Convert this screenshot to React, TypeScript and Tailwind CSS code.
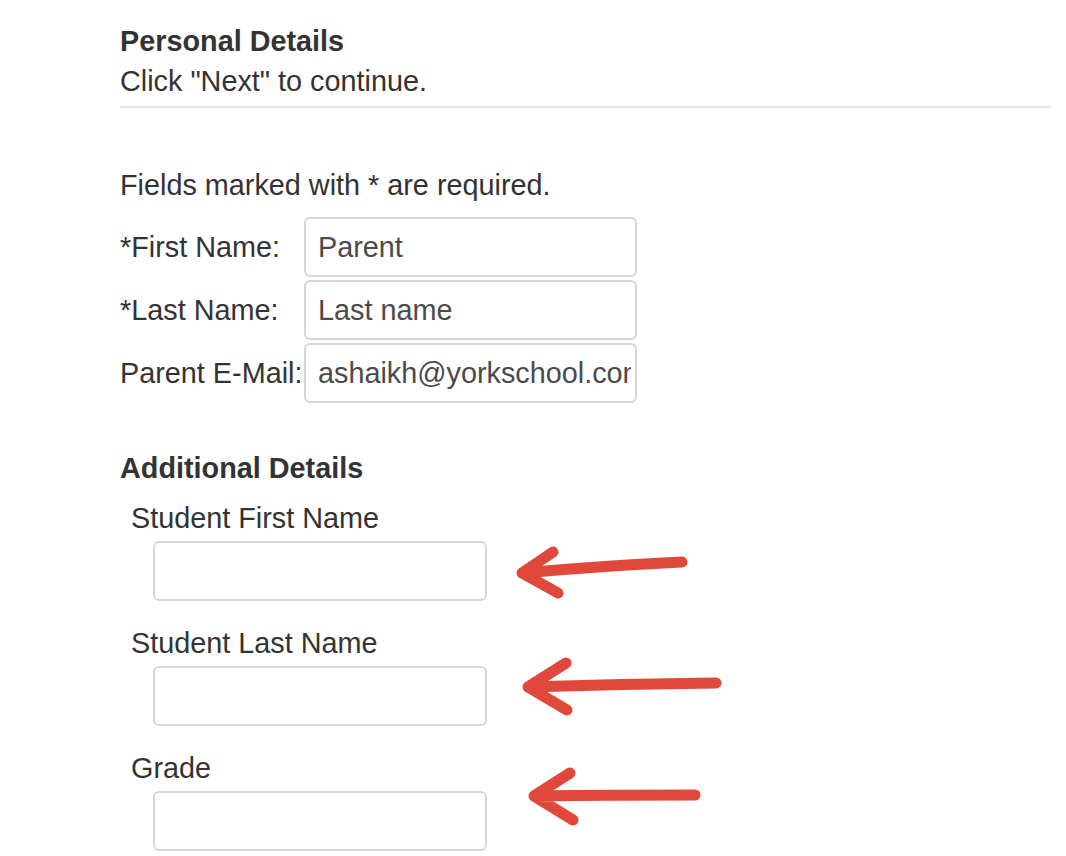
import React from "react";

const font = { fontFamily: '"Liberation Sans", Arial, Helvetica, sans-serif' };

function TextBox({ value, className = "" }: { value?: string; className?: string }) {
  return (
    <input
      readOnly
      value={value ?? ""}
      className={
        "block h-[60px] rounded-[6px] border-2 border-[#d6d6d6] bg-white pl-[12px] pr-[4px] text-[28.8px] text-[#4a4a4a] outline-none " +
        className
      }
      style={font}
    />
  );
}

export default function App() {
  const rows: [string, string][] = [
    ["*First Name:", "Parent"],
    ["*Last Name:", "Last name"],
    ["Parent E-Mail:", "ashaikh@yorkschool.com"],
  ];
  const extra = ["Student First Name", "Student Last Name", "Grade"];
  return (
    <div
      className="relative h-[856px] w-[1066px] overflow-hidden bg-white pl-[120px] pr-[16px] pt-[21px] text-[28.8px] leading-[40px] text-[#333333]"
      style={font}
    >
      <div className="font-bold">Personal Details</div>
      <div>Click "Next" to continue.</div>
      <div className="mt-[5px] h-[2px] bg-[#e3e3e3]" />
      <div className="mt-[57px]">Fields marked with * are required.</div>
      <div className="mt-[12px] flex flex-col gap-[3px]">
        {rows.map(([label, val]) => (
          <div key={label} className="flex items-center">
            <div className="w-[184px] whitespace-nowrap">{label}</div>
            <TextBox value={val} className="w-[333px]" />
          </div>
        ))}
      </div>
      <div className="mt-[45px] font-bold">Additional Details</div>
      <div className="mt-[10px] flex flex-col gap-[22px] pl-[11px]">
        {extra.map((label) => (
          <div key={label}>
            <div>{label}</div>
            <TextBox className="ml-[22px] mt-[3px] w-[334px]" />
          </div>
        ))}
      </div>
      <svg
        className="pointer-events-none absolute left-0 top-0"
        width="1066"
        height="856"
        viewBox="0 0 1066 856"
        fill="none"
        stroke="#e0483b"
        strokeWidth="11"
        strokeLinecap="round"
        strokeLinejoin="round"
      >
        <path d="M682 562 Q600 566 522 573 M553 552 L522 573 L558 593" />
        <path d="M716 683 Q620 684 528 687 M566 663 L528 687 L567 710" />
        <path d="M695 795 Q610 795 534 796 M570 773 L534 796 L573 820" />
      </svg>
    </div>
  );
}
